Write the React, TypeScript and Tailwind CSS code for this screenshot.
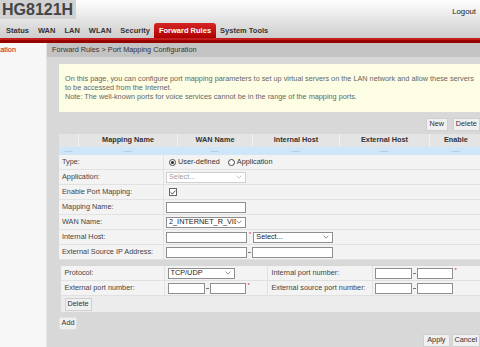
import React from "react";

const tabs = ["Status", "WAN", "LAN", "WLAN", "Security", "Forward Rules", "System Tools"];

function Chevron({ color = "#777" }: { color?: string }) {
  return (
    <svg width="6" height="4" viewBox="0 0 6 4" className="shrink-0">
      <path d="M0.6 0.6 L3 3.2 L5.4 0.6" fill="none" stroke={color} strokeWidth="0.8" />
    </svg>
  );
}

function FakeSelect({
  text,
  width,
  disabled = false,
}: {
  text: string;
  width: string;
  disabled?: boolean;
}) {
  return (
    <div
      className={`flex h-[11px] items-center justify-between overflow-hidden border bg-white pl-[2px] pr-[3px] ${width} ${
        disabled ? "border-[#cfcfcf] text-[#a0a0a0]" : "border-[#8e8e8e] text-[#222]"
      }`}
    >
      <span className="overflow-hidden whitespace-nowrap leading-none">{text}</span>
      <Chevron color={disabled ? "#bbb" : "#777"} />
    </div>
  );
}

function Box({ width }: { width: string }) {
  return <div className={`h-[11px] border border-[#8e8e8e] bg-white ${width}`} />;
}

function Dash() {
  return <span className="mx-[1px] h-[1px] w-[3px] bg-[#777]" />;
}

function Star() {
  return <span className="ml-[2px] self-start pt-[1px] text-[6px] leading-none text-[#e02020]">*</span>;
}

function Radio({ checked }: { checked?: boolean }) {
  return (
    <span className="flex h-[7px] w-[7px] items-center justify-center rounded-full border border-[#444] bg-white">
      {checked && <span className="h-[3px] w-[3px] rounded-full bg-[#222]" />}
    </span>
  );
}

function Btn({ text, className = "" }: { text: string; className?: string }) {
  return (
    <div
      className={`flex h-[13px] items-center justify-center border border-[#d0d0d0] bg-[#f0f0f0] px-[3px] text-[#333] ${className}`}
    >
      {text}
    </div>
  );
}

function FormRow({ label, children }: { label: string; children?: React.ReactNode }) {
  return (
    <div className="grid h-[15px] grid-cols-[105px_1fr] border-b border-[#e2e2e2] bg-[#f3f3f3]">
      <div className="flex items-center border-r border-[#e2e2e2] pl-[3px] text-[#444]">{label}</div>
      <div className="flex items-center pl-[2px]">{children}</div>
    </div>
  );
}

export default function App() {
  const cols = ["", "Mapping Name", "WAN Name", "Internal Host", "External Host", "Enable"];

  return (
    <div className="h-[347px] w-[480px] overflow-hidden bg-[#d8d8d8] font-['Liberation_Sans',Arial,sans-serif] text-[7.3px] text-[#333]">
      <header className="h-[38px] bg-gradient-to-b from-white to-[#cdcdcd]">
        <div className="flex h-[22px] items-start justify-between">
          <div className="h-[19px] bg-[#d2d2d2] pl-[2px] pr-[3px] text-[16px] font-bold leading-[19px] text-[#454545]">
            HG8121H
          </div>
          <div className="mr-[4px] mt-[6px] text-[7.8px] text-[#222]">Logout</div>
        </div>
        <nav className="flex h-[16px] items-end pl-[1.5px] text-[7.5px]">
          {tabs.map((t) =>
            t === "Forward Rules" ? (
              <div
                key={t}
                className="flex h-[15px] items-center rounded-t-[3px] bg-gradient-to-b from-[#d62222] to-[#ae0000] px-[4.5px] font-bold text-white"
              >
                {t}
              </div>
            ) : (
              <div key={t} className="flex h-[15px] items-center px-[4.5px] font-bold text-[#333]">
                {t}
              </div>
            ),
          )}
        </nav>
      </header>
      <div className="h-[5px] border-t-2 border-[#c41d1d] bg-[#980000]" />

      <div className="flex">
        <aside className="h-[304px] w-[47px] shrink-0 border-r border-[#e4e4e4] bg-[#f7f7f7]">
          <div className="flex h-[14px] w-[16px] items-center justify-end overflow-hidden whitespace-nowrap text-[#c80000]">
            Port Mapping Configuration
          </div>
        </aside>

        <main className="flex-1">
          <div className="flex h-[14px] items-center bg-[#c3c3c3] pl-[5px] text-[#333]">
            Forward Rules &gt; Port Mapping Configuration
          </div>

          <div className="pl-[12px] pr-[2px] pt-[7px]">
            <div className="mr-[2px] h-[48px] whitespace-nowrap bg-[#fdfde3] px-[6px] pt-[10px] leading-[9px] text-[#666]">
              On this page, you can configure port mapping parameters to set up virtual servers on the LAN network and allow these servers
              <br />
              to be accessed from the Internet.
              <br />
              Note: The well-known ports for voice services cannot be in the range of the mapping ports.
            </div>

            <div className="mt-[6px] flex justify-end gap-[5px] pr-[2px]">
              <Btn text="New" className="w-[22px]" />
              <Btn text="Delete" className="w-[27px]" />
            </div>

            <div className="mt-[3px]">
              <div className="grid h-[13px] grid-cols-[19px_99px_75px_87px_90px_1fr] bg-[#e4e4e4]">
                {cols.map((c, i) => (
                  <div
                    key={i}
                    className={`flex items-center justify-center font-bold text-[#333] ${i > 0 ? "border-l border-[#f2f2f2]" : ""}`}
                  >
                    {c}
                  </div>
                ))}
              </div>
              <div className="grid h-[8px] grid-cols-[19px_99px_75px_87px_90px_1fr] bg-[#cfe5f8]">
                {cols.map((_, i) => (
                  <div key={i} className="flex items-center justify-center text-[6px] leading-none text-[#7d9fc2]">
                    ----
                  </div>
                ))}
              </div>

              <FormRow label="Type:">
                <div className="flex items-center gap-[2px] pl-[3px] text-[#333]">
                  <Radio checked />
                  <span>User-defined</span>
                  <span className="ml-[4px]" />
                  <Radio />
                  <span>Application</span>
                </div>
              </FormRow>
              <FormRow label="Application:">
                <FakeSelect text="Select..." width="w-[80px]" disabled />
              </FormRow>
              <FormRow label="Enable Port Mapping:">
                <span className="ml-[3px] flex h-[8px] w-[8px] items-center justify-center border border-[#666] bg-white">
                  <svg width="6" height="5" viewBox="0 0 6 5">
                    <path d="M0.6 2.4 L2.3 4 L5.4 0.7" fill="none" stroke="#333" strokeWidth="0.9" />
                  </svg>
                </span>
              </FormRow>
              <FormRow label="Mapping Name:">
                <Box width="w-[80px]" />
              </FormRow>
              <FormRow label="WAN Name:">
                <FakeSelect text="2_INTERNET_R_VID_10" width="w-[80px]" />
              </FormRow>
              <FormRow label="Internal Host:">
                <Box width="w-[81px]" />
                <Star />
                <div className="ml-[2px]">
                  <FakeSelect text="Select..." width="w-[80px]" />
                </div>
              </FormRow>
              <FormRow label="External Source IP Address:">
                <Box width="w-[81px]" />
                <Dash />
                <Box width="w-[81px]" />
              </FormRow>
            </div>

            <div className="ml-[1.5px] mt-[6px] bg-[#ececec]">
              <div className="grid h-[15px] grid-cols-[104px_103px_105px_1fr] border-b border-[#e0e0e0] bg-[#f3f3f3]">
                <div className="flex items-center border-r border-[#e2e2e2] pl-[4px] text-[#444]">Protocol:</div>
                <div className="flex items-center border-r border-[#e2e2e2] pl-[3px]">
                  <FakeSelect text="TCP/UDP" width="w-[67px]" />
                </div>
                <div className="flex items-center border-r border-[#e2e2e2] pl-[4px] text-[#444]">Internal port number:</div>
                <div className="flex items-center pl-[2px]">
                  <Box width="w-[37px]" />
                  <Dash />
                  <Box width="w-[36px]" />
                  <Star />
                </div>
              </div>
              <div className="grid h-[15px] grid-cols-[104px_103px_105px_1fr] border-b border-[#e0e0e0] bg-[#f3f3f3]">
                <div className="flex items-center border-r border-[#e2e2e2] pl-[4px] text-[#444]">External port number:</div>
                <div className="flex items-center border-r border-[#e2e2e2] pl-[3px]">
                  <Box width="w-[37px]" />
                  <Dash />
                  <Box width="w-[36px]" />
                  <Star />
                </div>
                <div className="flex items-center border-r border-[#e2e2e2] pl-[4px] text-[#444]">External source port number:</div>
                <div className="flex items-center pl-[2px]">
                  <Box width="w-[37px]" />
                  <Dash />
                  <Box width="w-[36px]" />
                </div>
              </div>
              <div className="flex h-[16px] items-center pl-[4px]">
                <Btn text="Delete" className="h-[12px] w-[27px]" />
              </div>
            </div>

            <div className="mt-[5px] flex">
              <Btn text="Add" className="h-[12px] w-[18px] border-[#e0e0e0] bg-[#e9e9e9]" />
            </div>

            <div className="mt-[4px] flex justify-end gap-[2px] pr-[2px]">
              <Btn text="Apply" className="h-[12px] w-[27px]" />
              <Btn text="Cancel" className="h-[12px] w-[28px]" />
            </div>
          </div>
        </main>
      </div>
    </div>
  );
}
